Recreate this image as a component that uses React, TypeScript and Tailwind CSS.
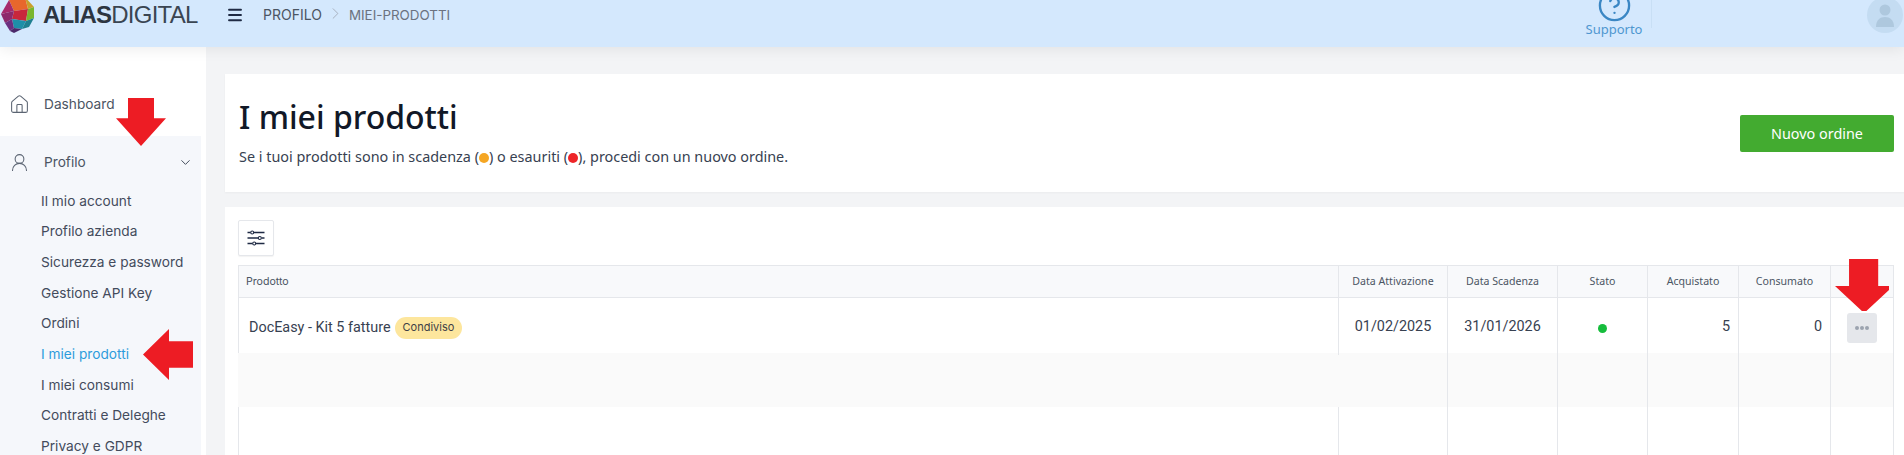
import { ChevronDown, ChevronRight, CircleHelp, House, Menu, UserRound } from "lucide-react";

const subMenu = [
  "Il mio account",
  "Profilo azienda",
  "Sicurezza e password",
  "Gestione API Key",
  "Ordini",
  "I miei prodotti",
  "I miei consumi",
  "Contratti e Deleghe",
  "Privacy e GDPR",
];

const cols = "grid grid-cols-[1100px_109px_110px_90px_91px_92px_63px]";
const cell = "border-r border-[#e5e7eb]";
const heads = ["Data Attivazione", "Data Scadenza", "Stato", "Acquistato", "Consumato", ""];

const Logo = () => (
  <svg viewBox="0 0 35 36" className="w-[35px] h-[36px] shrink-0">
    <polygon points="9,3 25,0 28,12 14,14" fill="#e8672c" />
    <polygon points="25,0 34,10 28,12" fill="#c9a02c" />
    <polygon points="9,3 14,14 1,17" fill="#a62a6b" />
    <polygon points="14,14 28,12 26,24 12,22" fill="#c8273c" />
    <polygon points="28,12 34,10 34,21 26,24" fill="#79b62f" />
    <polygon points="1,17 14,14 12,22 5,26" fill="#8d2a6c" />
    <polygon points="12,22 26,24 22,32 14,31" fill="#1e8fa8" />
    <polygon points="26,24 34,21 29,30 22,32" fill="#1f7f8f" />
    <polygon points="5,26 12,22 14,31 10,34" fill="#6b2f80" />
    <polygon points="10,34 14,31 22,32 14,36" fill="#4c2a6a" />
  </svg>
);

const Arrow = ({ className, points }: { className: string; points: string }) => (
  <svg viewBox="0 0 50 50" preserveAspectRatio="none" className={`absolute ${className}`}>
    <polygon points={points} fill="#ed1c24" />
  </svg>
);

const Sliders = () => (
  <svg viewBox="0 0 18 16" className="h-[16px] w-[18px]" fill="none" stroke="#1f2a44" strokeWidth="1.5">
    <path d="M0.5 2.5H3.5M7 2.5H17.5M0.5 8H11M14.5 8H17.5M0.5 13.5H5.5M9 13.5H17.5" />
    <circle cx="5.2" cy="2.5" r="1.5" strokeWidth="1.1" />
    <circle cx="12.8" cy="8" r="1.5" strokeWidth="1.1" />
    <circle cx="7.2" cy="13.5" r="1.5" strokeWidth="1.1" />
  </svg>
);

export default function App() {
  return (
    <div className="relative h-[455px] overflow-hidden bg-[#f3f4f6] font-['Inter',sans-serif] text-[14px] text-[#374151]">
      <header className="relative z-10 flex h-[47px] items-start overflow-hidden bg-[#d4e8fd] shadow-[0_2px_14px_rgba(0,0,0,0.08)]">
        <div className="-mt-[3px] flex w-[226px] shrink-0 items-center">
          <Logo />
          <span className="ml-2 mt-[0px] font-['Liberation_Sans',sans-serif] text-[24px] leading-[36px] tracking-[-0.75px] text-[#3a4552]">
            <b className="text-[#2c3541]">ALIAS</b>DIGITAL
          </span>
        </div>
        <Menu className="mt-[6px] h-[18px] w-[18px] text-[#1f2a44]" strokeWidth={2.5} />
        <div className="ml-[19px] mt-[7px] flex items-center text-[14px] leading-[16px] text-[#4b5563]">
          <span>PROFILO</span>
          <ChevronRight className="mx-[4px] -mt-[4px] h-[19px] w-[19px] text-[#9ca3af]" strokeWidth={1} />
          <span className="text-[13.4px] text-[#6b7280]">MIEI-PRODOTTI</span>
        </div>
        <div className="ml-auto flex items-start">
          <div className="flex w-[56px] flex-col items-center">
            <CircleHelp className="-mt-[12px] -mb-[3px] h-[35px] w-[35px] shrink-0 text-[#3b87c4]" strokeWidth={1.6} />
            <span className="font-['Noto_Sans',sans-serif] text-[13px] leading-[18px] text-[#4f97d0]">Supporto</span>
          </div>
          <div className="ml-[9px] h-[28px] w-px bg-[#c8dff5]" />
          <div className="ml-[215px] mr-[1px] mt-[-3px] flex h-[36px] w-[36px] items-center justify-center overflow-hidden rounded-full bg-[#c4dcf2]">
            <svg viewBox="0 0 36 36" className="h-[36px] w-[36px]">
              <circle cx="18" cy="13" r="5.5" fill="#aec8de" />
              <path d="M9 30c0-7 4-10 9-10s9 3 9 10z" fill="#aec8de" />
            </svg>
          </div>
        </div>
      </header>

      <div className="flex h-[408px] text-[13.7px]">
        <aside className="w-[206px] shrink-0 bg-white pt-[43px]">
          <div className="flex h-[46px] items-start pl-[9px] pt-[4px] text-[#4b5563]">
            <House className="h-[21px] w-[21px] text-[#5b6472]" strokeWidth={1.2} />
            <span className="ml-[14px] leading-[20px]">Dashboard</span>
          </div>
          <div className="w-[201px] bg-[#f5f7fb] pb-4">
            <div className="flex h-[47px] items-center pl-[9px] pr-[8px] pt-[6px]">
              <UserRound className="h-[21px] w-[21px] text-[#5b6472]" strokeWidth={1.2} />
              <span className="ml-[14px] text-[#4b5563]">Profilo</span>
              <ChevronDown className="ml-auto h-[15px] w-[15px] text-[#374151]" strokeWidth={1.5} />
            </div>
            <ul className="flex flex-col pl-[41px] pt-[2.5px]">
              {subMenu.map((item) => (
                <li
                  key={item}
                  className={`h-[30.7px] leading-[30.7px] ${item === "I miei prodotti" ? "text-[#2d9cdb]" : "text-[#434b5c]"}`}
                >
                  {item}
                </li>
              ))}
            </ul>
          </div>
        </aside>

        <main className="flex-1 pl-[19px] pt-[27px]">
          <section className="flex h-[118px] items-start justify-between bg-white pl-[14px] pr-[11px] shadow-[0_1px_2px_rgba(0,0,0,0.04)]">
            <div className="font-['Noto_Sans',sans-serif]">
              <h1 className="mt-[23px] text-[32px] font-medium leading-[40px] text-[#111827]">I miei prodotti</h1>
              <p className="mt-[10px] text-[14.4px] leading-[20px] text-[#374151]">
                Se i tuoi prodotti sono in scadenza (
                <span className="inline-block h-[10px] w-[10px] rounded-full bg-[#f5a623] align-[-1px]" />) o esauriti (
                <span className="inline-block h-[10px] w-[10px] rounded-full bg-[#ee2528] align-[-1px]" />), procedi con un nuovo ordine.
              </p>
            </div>
            <button className="mt-[41px] h-[37px] w-[154px] rounded-[2px] bg-[#43ab30] font-['Noto_Sans',sans-serif] text-[14.4px] text-white">
              Nuovo ordine
            </button>
          </section>

          <section className="mt-[15px] h-[260px] bg-white pl-[13px] pr-[11px] pt-[13px]">
            <button className="flex h-[36px] w-[36px] items-center justify-center rounded-[2px] border border-[#e5e7eb] bg-white shadow-[0_1px_1px_rgba(0,0,0,0.05)]">
              <Sliders />
            </button>

            <div className={`${cols} mt-[9px] h-[33px] border-y border-l border-[#e5e7eb] bg-[#f8f9fb] text-[10.6px] leading-[31px] text-[#4b5563]`}>
              <div className={`${cell} pl-[7px]`}>Prodotto</div>
              {heads.map((h, i) => (
                <div key={i} className={`${cell} text-center font-['Noto_Sans',sans-serif]`}>
                  {h}
                </div>
              ))}
            </div>

            <div className={`${cols} h-[55px] border-l border-[#e5e7eb] text-[14.4px] leading-[57px] text-[#374151]`}>
              <div className={`${cell} flex items-center pl-[10px] pt-[2px]`}>
                <span className="font-['Roboto',sans-serif] leading-[20px]">DocEasy - Kit 5 fatture</span>
                <span className="ml-[4px] flex h-[22px] items-center rounded-full bg-[#fde69d] px-[8px] text-[11px] text-[#3f3f46]">Condiviso</span>
              </div>
              <div className={`${cell} text-center font-['Roboto',sans-serif]`}>01/02/2025</div>
              <div className={`${cell} text-center font-['Roboto',sans-serif]`}>31/01/2026</div>
              <div className={`${cell} flex items-center justify-center`}>
                <span className="mt-[3px] h-[9px] w-[9px] rounded-full bg-[#16bd3c]" />
              </div>
              <div className={`${cell} pr-[8px] text-right font-['Roboto',sans-serif]`}>5</div>
              <div className={`${cell} pr-[8px] text-right font-['Roboto',sans-serif]`}>0</div>
              <div className={`${cell} flex items-center justify-center`}>
                <button className="mt-[2px] flex h-[30px] w-[30px] items-center justify-center gap-[1px] rounded-[3px] bg-[#e5e7eb]">
                  <i className="h-[4px] w-[4px] rounded-full bg-[#9ca3af]" />
                  <i className="h-[4px] w-[4px] rounded-full bg-[#9ca3af]" />
                  <i className="h-[4px] w-[4px] rounded-full bg-[#9ca3af]" />
                </button>
              </div>
            </div>

            <div className={`${cols} h-[54px] border-l border-[#fafafa] bg-[#fafafa]`}>
              {[0, 1, 2, 3, 4, 5, 6].map((i) => (
                <div key={i} className={i === 0 ? "" : cell} />
              ))}
            </div>

            <div className={`${cols} h-[60px] border-l border-[#e5e7eb]`}>
              {[0, 1, 2, 3, 4, 5, 6].map((i) => (
                <div key={i} className={cell} />
              ))}
            </div>
          </section>
        </main>
      </div>

      <Arrow className="left-[116px] top-[98px] h-[48px] w-[50px]" points="12,0 38,0 38,21 50,21 25,50 0,21 12,21" />
      <Arrow className="left-[143px] top-[329px] h-[51px] w-[50px]" points="50,12 50,38 26,38 26,50 0,25 26,0 26,12" />
      <Arrow className="left-[1835px] top-[259px] h-[52px] w-[54px]" points="13,0 40,0 40,26 54,26 27,52 0,26 13,26" />
    </div>
  );
}
